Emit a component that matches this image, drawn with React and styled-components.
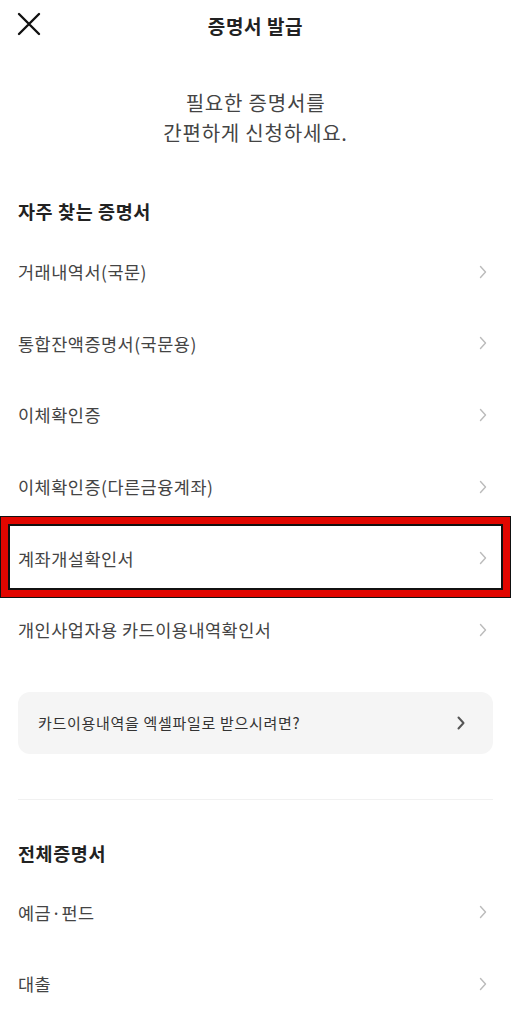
import React from 'react';
import styled, { createGlobalStyle } from 'styled-components';

const FONT = `"Noto Sans CJK KR", "Noto Sans", sans-serif`;
const ROW_HEIGHT = 71.6;

const GlobalStyle = createGlobalStyle`
  html, body {
    margin: 0;
    padding: 0;
    background: #fff;
  }
  body {
    font-family: ${FONT};
    -webkit-font-smoothing: antialiased;
  }
`;

const Screen = styled.div`
  width: 511px;
  min-height: 1024px;
  background: #fff;
  overflow: hidden;
`;

const Header = styled.header`
  position: relative;
  height: 50px;
  display: flex;
  align-items: center;
  justify-content: center;
`;

const CloseButton = styled.button`
  position: absolute;
  left: 14px;
  top: 9px;
  width: 30px;
  height: 30px;
  padding: 0;
  border: none;
  background: none;
  display: flex;
  align-items: center;
  justify-content: center;
`;

const Title = styled.h1`
  margin: 0;
  font-size: 19px;
  font-weight: 700;
  color: #222;
  letter-spacing: 0.6px;
`;

const Intro = styled.p`
  margin: 38px 0 0;
  text-align: center;
  font-size: 20px;
  line-height: 30px;
  color: #444;
  letter-spacing: 0.8px;
`;

const SectionTitle = styled.h2`
  margin: ${({ $top }) => $top}px 0 ${({ $bottom }) => $bottom}px;
  padding: 0 18px;
  font-size: 18.5px;
  line-height: 24px;
  font-weight: 700;
  color: #222;
  letter-spacing: 0.6px;
`;

const List = styled.ul`
  list-style: none;
  margin: 0;
  padding: 0;
`;

const Item = styled.li`
  position: relative;
  height: ${ROW_HEIGHT}px;
  padding: 0 24px 0 18px;
  display: flex;
  align-items: center;
  justify-content: space-between;
  font-size: 17.5px;
  letter-spacing: 0.5px;
  color: #444;
`;

const Highlight = styled.div`
  position: absolute;
  left: 0;
  right: 0;
  top: -6px;
  bottom: -4px;
  border: 1px solid #111;
  box-shadow: inset 0 0 0 7px #e10600, inset 0 0 0 9px #111;
  pointer-events: none;
`;

const InfoCard = styled.div`
  margin: 26px 18px 0;
  height: 62px;
  padding: 0 28px 0 20px;
  border-radius: 12px;
  background: #f5f5f5;
  display: flex;
  align-items: center;
  justify-content: space-between;
  font-size: 15px;
  letter-spacing: 0.7px;
  color: #333;
`;

const Divider = styled.hr`
  margin: 45px 18px 0;
  border: none;
  height: 1px;
  background: #f1f1f1;
`;

const Chevron = ({ color = '#bbb', width = 1.4 }) => (
  <svg width="8" height="14" viewBox="0 0 8 14" fill="none">
    <polyline
      points="1.5,1.5 6.5,7 1.5,12.5"
      stroke={color}
      strokeWidth={width}
      strokeLinecap="round"
      strokeLinejoin="round"
    />
  </svg>
);

const frequent = [
  '거래내역서(국문)',
  '통합잔액증명서(국문용)',
  '이체확인증',
  '이체확인증(다른금융계좌)',
  '계좌개설확인서',
  '개인사업자용 카드이용내역확인서'
];

const all = ['예금·펀드', '대출'];

const App = () => (
  <Screen>
    <GlobalStyle />
    <Header>
      <CloseButton aria-label="닫기">
        <svg width="24" height="24" viewBox="0 0 24 24" fill="none">
          <path d="M2 2 L22 22 M22 2 L2 22" stroke="#111" strokeWidth="2.4" strokeLinecap="round" />
        </svg>
      </CloseButton>
      <Title>증명서 발급</Title>
    </Header>

    <Intro>
      필요한 증명서를
      <br />
      간편하게 신청하세요.
    </Intro>

    <SectionTitle $top={51} $bottom={13}>자주 찾는 증명서</SectionTitle>
    <List>
      {frequent.map((label, i) => (
        <Item key={label}>
          <span>{label}</span>
          <Chevron />
          {i === 4 && <Highlight />}
        </Item>
      ))}
    </List>

    <InfoCard>
      <span>카드이용내역을 엑셀파일로 받으시려면?</span>
      <Chevron color="#555" width={2} />
    </InfoCard>

    <Divider />

    <SectionTitle $top={41} $bottom={12}>전체증명서</SectionTitle>
    <List>
      {all.map(label => (
        <Item key={label}>
          <span>{label}</span>
          <Chevron />
        </Item>
      ))}
    </List>
  </Screen>
);

export default App;
